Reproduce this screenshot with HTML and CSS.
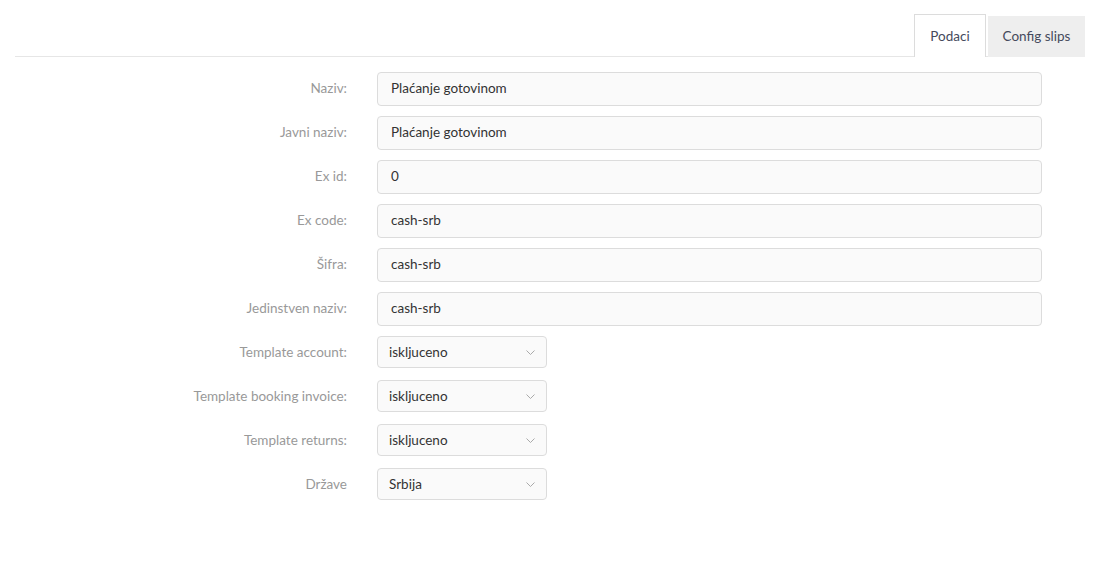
FILE: index.html
```html
<!DOCTYPE html>
<html>
<head>
<meta charset="utf-8">
<link rel="stylesheet" href="styles.css">
</head>
<body>
<div class="page">
  <div class="tabs">
    <div class="tab active">Podaci</div>
    <div class="tab">Config slips</div>
  </div>
  <form class="form">
    <div class="row"><label class="lbl">Naziv:</label><div class="input">Plaćanje gotovinom</div></div>
    <div class="row"><label class="lbl">Javni naziv:</label><div class="input">Plaćanje gotovinom</div></div>
    <div class="row"><label class="lbl">Ex id:</label><div class="input">0</div></div>
    <div class="row"><label class="lbl">Ex code:</label><div class="input">cash-srb</div></div>
    <div class="row"><label class="lbl">Šifra:</label><div class="input">cash-srb</div></div>
    <div class="row"><label class="lbl">Jedinstven naziv:</label><div class="input">cash-srb</div></div>
    <div class="row"><label class="lbl">Template account:</label><div class="select"><span>iskljuceno</span><svg class="chev" width="9" height="5" viewBox="0 0 9 5"><path d="M0.5 0.5l4 4 4-4" fill="none" stroke="#aaa" stroke-width="1"/></svg></div></div>
    <div class="row"><label class="lbl">Template booking invoice:</label><div class="select"><span>iskljuceno</span><svg class="chev" width="9" height="5" viewBox="0 0 9 5"><path d="M0.5 0.5l4 4 4-4" fill="none" stroke="#aaa" stroke-width="1"/></svg></div></div>
    <div class="row"><label class="lbl">Template returns:</label><div class="select"><span>iskljuceno</span><svg class="chev" width="9" height="5" viewBox="0 0 9 5"><path d="M0.5 0.5l4 4 4-4" fill="none" stroke="#aaa" stroke-width="1"/></svg></div></div>
    <div class="row"><label class="lbl">Države</label><div class="select"><span>Srbija</span><svg class="chev" width="9" height="5" viewBox="0 0 9 5"><path d="M0.5 0.5l4 4 4-4" fill="none" stroke="#aaa" stroke-width="1"/></svg></div></div>
  </form>
</div>
</body>
</html>
```
FILE: styles.css
```css
html, body { margin: 0; padding: 0; background: #fff; }
body { font-family: "Lato", "Open Sans", sans-serif; font-size: 13.5px; color: #333; }
.page { padding: 14px 16px 0 15px; }
.tabs { display: flex; justify-content: flex-end; gap: 2px; border-bottom: 1px solid #e6e6e6; height: 42px; }
.tab { height: 41px; width: 97px; display: flex; align-items: center; justify-content: center; color: #454a5c; font-size: 13.5px; box-sizing: border-box; margin-top: 2px; background: #eeeeee; padding-bottom: 1px; }
.tab.active { width: 72px; background: #fff; border: 1px solid #dcdcdc; border-bottom: none; height: 43px; margin-top: 0; padding-bottom: 0; }
.form { margin-top: 15px; }
.row { display: flex; align-items: flex-start; margin-bottom: 10px; height: 34px; }
.lbl { width: 332px; text-align: right; color: #999; height: 34px; line-height: 33px; font-size: 13.5px; }
.input { margin-left: 30px; width: 665px; height: 34px; box-sizing: border-box; border: 1px solid #dcdcdc; border-radius: 4px; background: #fafafa; padding: 0 13px; line-height: 31px; color: #333; }
.select { margin-left: 30px; width: 170px; height: 32px; box-sizing: border-box; border: 1px solid #dcdcdc; border-radius: 4px; background: #fafafa; padding: 0 11px 0 11px; display: flex; align-items: center; justify-content: space-between; color: #333; line-height: 29px; }
.select span { display: block; }
.chev { display: block; }
```
